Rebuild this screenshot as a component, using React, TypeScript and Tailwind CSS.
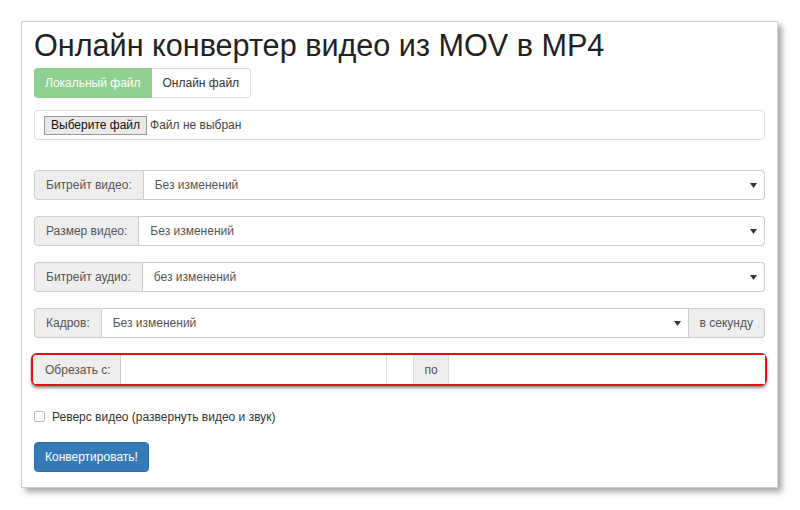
import React from "react";

const font = { fontFamily: '"Liberation Sans", Arial, sans-serif' };

function Caret() {
  return (
    <svg width="7" height="5" viewBox="0 0 7 5" className="shrink-0">
      <path d="M0 0h7L3.5 5z" fill="#333" />
    </svg>
  );
}

function SelectRow({ label, value, suffix }: { label: string; value: string; suffix?: string }) {
  return (
    <div className="flex h-[30px] text-[12px] text-[#555]">
      <div className="flex items-center whitespace-nowrap rounded-l-[4px] border border-[#ccc] bg-[#eee] px-[11px]">
        {label}
      </div>
      <div
        className={
          "flex flex-1 items-center justify-between border border-l-0 border-[#ccc] bg-white pl-[11px] pr-[7px] " +
          (suffix ? "" : "rounded-r-[4px]")
        }
      >
        <span>{value}</span>
        <Caret />
      </div>
      {suffix && (
        <div className="flex items-center whitespace-nowrap rounded-r-[4px] border border-l-0 border-[#ccc] bg-[#eee] px-[11px]">
          {suffix}
        </div>
      )}
    </div>
  );
}

export default function App() {
  return (
    <div className="h-[510px] w-[800px] bg-white" style={font}>
      <div className="ml-[21px] pt-[21px]">
        <div className="h-[467px] w-[757px] border border-[#d0d0d0] bg-white pl-[12px] pr-[12px] pt-[5px] shadow-[4px_4px_6px_rgba(0,0,0,0.35)]">
          <h1 className="text-[30.6px] leading-[36px] text-[#222]">Онлайн конвертер видео из MOV в MP4</h1>

          <div className="mt-[5px] flex h-[30px] w-fit text-[12px]">
            <div className="flex items-center rounded-l-[4px] bg-[#8fcf8f] px-[11px] text-white">Локальный файл</div>
            <div className="flex items-center rounded-r-[4px] border border-l-0 border-[#ddd] px-[11px] text-[#333]">
              Онлайн файл
            </div>
          </div>

          <div className="mt-[12px] flex h-[30px] items-center rounded-[4px] border border-[#ddd] pl-[9px] text-[12px] text-[#444]">
            <div className="flex h-[19px] items-center border border-[#999] bg-[#e9e9e9] px-[6px] text-[#111]">
              Выберите файл
            </div>
            <span className="ml-[3px]">Файл не выбран</span>
          </div>

          <div className="mt-[30px] flex flex-col gap-[16px]">
            <SelectRow label="Битрейт видео:" value="Без изменений" />
            <SelectRow label="Размер видео:" value="Без изменений" />
            <SelectRow label="Битрейт аудио:" value="без изменений" />
            <SelectRow label="Кадров:" value="Без изменений" suffix="в секунду" />
          </div>

          <div className="-ml-[3px] mt-[15px] w-[736px] rounded-[6px] border-2 border-[#e81010] shadow-[0_2px_3px_rgba(0,0,0,0.45)]">
            <div className="flex h-[29px] text-[12px] text-[#555]">
              <div className="flex w-[88px] items-center whitespace-nowrap rounded-l-[3px] border-r border-[#ccc] bg-[#eee] pl-[12px]">
                Обрезать с:
              </div>
              <div className="w-[266px] border-r border-[#ddd] bg-white" />
              <div className="w-[26px] bg-white" />
              <div className="flex w-[36px] items-center justify-center border-x border-[#ddd] bg-[#eee]">по</div>
              <div className="flex-1 bg-white" />
            </div>
          </div>

          <label className="mt-[23px] flex h-[15px] items-center text-[12px] text-[#333]">
            <span className="h-[11px] w-[11px] rounded-[2px] border border-[#bbb] bg-white" />
            <span className="ml-[7px]">Реверс видео (развернуть видео и звук)</span>
          </label>

          <button className="mt-[18px] flex h-[30px] items-center rounded-[4px] border border-[#2e6da4] bg-[#337ab7] px-[10px] text-[12px] text-white">
            Конвертировать!
          </button>
        </div>
      </div>
    </div>
  );
}
